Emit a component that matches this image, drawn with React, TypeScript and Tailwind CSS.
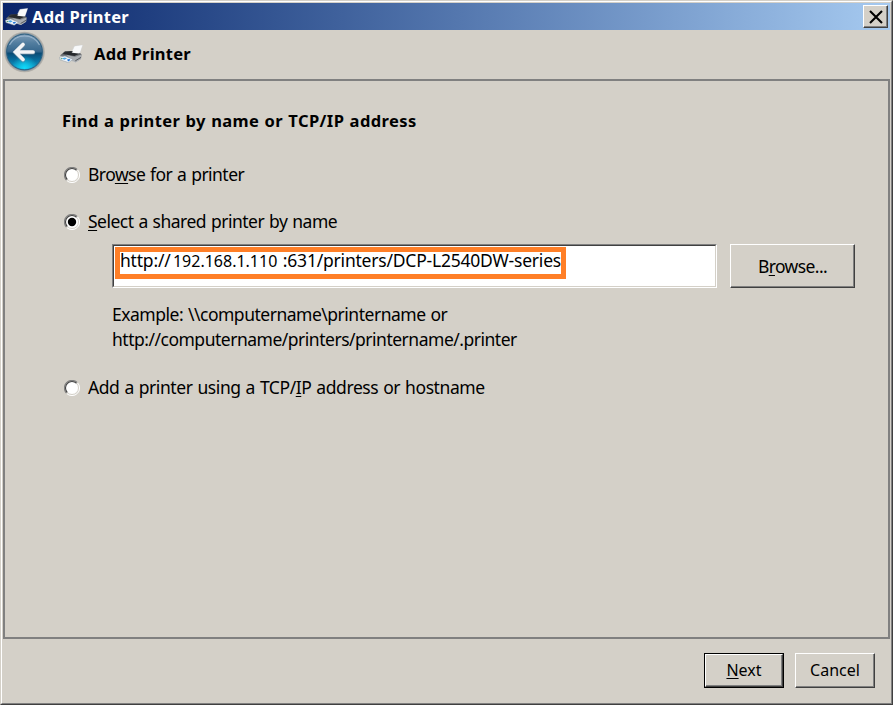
import React from 'react';

function PrinterIcon({ className }: { className: string }) {
  return (
    <svg viewBox="0 0 24 18" className={className}>
      <defs>
        <linearGradient id="pbody" x1="0" y1="0" x2="0" y2="1">
          <stop offset="0" stopColor="#2e3135" />
          <stop offset="0.45" stopColor="#7d8185" />
          <stop offset="1" stopColor="#c9cccf" />
        </linearGradient>
      </defs>
      <path d="M12 8.5 L15.5 1.2 L23.6 0 L20.5 9Z" fill="#f6f7f8" stroke="#d4d8dc" strokeWidth=".5" />
      <path d="M1 10.5 L6 6.2 L13 6 L21 8 L22.6 9.5 L22 14 L16.5 17.4 L9 15Z" fill="url(#pbody)" />
      <path d="M5 7.5 L12 6.4 L12.6 8 L20.5 8.6 L15.5 11 L4 9Z" fill="#26292d" />
      <path d="M13 7.8 L16 1.4 L23 .6 L20.4 8.6Z" fill="#f8f9fa" />
      <path d="M7 9.8 L15.8 12 L22.4 9.4 L22 14 L16.5 17.4 L13.5 15Z" fill="#a9adb1" />
      <path d="M16.3 15.8 L22 12.4" stroke="#55595e" strokeWidth="1" />
      <path d="M.5 12.3 L6 11 L14 14.4 L9.6 17.6 L1 14.8Z" fill="#eef4fa" stroke="#8f989f" strokeWidth=".5" />
      <path d="M3 13.2 L6 12.4 L8 13.6 L5.2 14.8Z" fill="#4fa8e8" />
      <path d="M8 14.4 L10.5 14 L11.5 15 L9.2 16.4Z" fill="#2677d4" />
      <path d="M1.8 13.2h1.6v1H1.8z" fill="#4f9b62" />
    </svg>
  );
}

function BackButton() {
  return (
    <svg viewBox="0 0 42 42" className="h-[42px] w-[42px] shrink-0">
      <defs>
        <linearGradient id="bk" x1="0" y1="0" x2="0" y2="1">
          <stop offset="0" stopColor="#7f9db8" />
          <stop offset=".25" stopColor="#527d9f" />
          <stop offset=".48" stopColor="#38688e" />
          <stop offset=".54" stopColor="#0a4c76" />
          <stop offset=".75" stopColor="#0873a3" />
          <stop offset="1" stopColor="#10a8d4" />
        </linearGradient>
        <radialGradient id="glow" cx=".5" cy=".98" r=".38">
          <stop offset="0" stopColor="#10dcfb" />
          <stop offset="1" stopColor="#10dcfb" stopOpacity="0" />
        </radialGradient>
      </defs>
      <circle cx="21.5" cy="21" r="20.3" fill="#b2afa9" />
      <circle cx="21.5" cy="21" r="19.2" fill="#8c9aa3" />
      <circle cx="21.5" cy="21" r="17.9" fill="url(#bk)" stroke="#2d5f80" strokeWidth="1" />
      <circle cx="21.5" cy="21" r="17" fill="url(#glow)" />
      <path d="M6.5 14 A17 17 0 0 1 36.5 14" fill="none" stroke="#a9c3d8" strokeWidth="1.2" opacity=".7" />
      <path d="M20 14 L12.5 21.5 L20 29 M13 21.5 H30" fill="none" stroke="#6d8799" strokeWidth="4.6" strokeLinecap="round" opacity=".6" />
      <path d="M20 13.5 L12.5 21 L20 28.5 M13 21 H30" fill="none" stroke="#f4f5f6" strokeWidth="3.7" strokeLinecap="round" />
    </svg>
  );
}

function Radio({ checked }: { checked?: boolean }) {
  return (
    <svg viewBox="0 0 16 16" className="relative top-px h-4 w-4 shrink-0">
      <circle cx="8" cy="8" r="6.8" fill="#fff" />
      <path d="M2.6 13.4 A7.5 7.5 0 0 1 13.4 2.6" fill="none" stroke="#808080" strokeWidth="1.1" />
      <path d="M3.4 12.6 A6.5 6.5 0 0 1 12.6 3.4" fill="none" stroke="#404040" strokeWidth="1.1" />
      <path d="M12.6 3.4 A6.5 6.5 0 0 1 3.4 12.6" fill="none" stroke="#d4d0c8" strokeWidth="1" />
      <path d="M13.4 2.6 A7.5 7.5 0 0 1 2.6 13.4" fill="none" stroke="#fff" strokeWidth="1" />
      {checked && <circle cx="8" cy="8" r="4.2" fill="#000" />}
    </svg>
  );
}

function Key({ children }: { children: React.ReactNode }) {
  return <span className="underline decoration-1 underline-offset-2">{children}</span>;
}

const raised =
  'flex items-center justify-center border border-t-white border-l-white border-r-[#404040] border-b-[#404040] bg-[#d4d0c8] shadow-[inset_-1px_-1px_0_#808080]';

export default function App() {
  return (
    <div className="flex h-[705px] w-[893px] flex-col overflow-hidden border-t border-l border-r border-b border-t-[#d4d0c8] border-l-[#d4d0c8] border-r-[#404040] border-b-[#404040] bg-[#d4d0c8] font-['Noto_Sans',sans-serif] text-[17.5px] whitespace-pre text-black">
      <div className="flex min-h-0 flex-1 flex-col border border-t-white border-l-white border-r-[#808080] border-b-[#808080] pt-px pr-px pl-px">
        <div className="flex h-[27px] shrink-0 items-center bg-linear-to-r from-[#0a246a] to-[#a6caf0] pr-[2px] pl-[2px]">
          <PrinterIcon className="h-[18px] w-[23px] shrink-0" />
          <span className="ml-1 flex-1 text-[16.5px] leading-[26px] font-bold tracking-[0.25px] text-white">Add Printer</span>
          <button className={raised + ' h-[23px] w-[25px]'}>
            <svg viewBox="0 0 14 14" className="h-[14px] w-[14px]">
              <path d="M1 1 L13 13 M13 1 L1 13" stroke="#000" strokeWidth="2.1" />
            </svg>
          </button>
        </div>
        <div className="flex h-[49px] shrink-0 items-start">
          <div className="pt-[1px]">
            <BackButton />
          </div>
          <PrinterIcon className="mt-[15px] ml-[14px] h-[18px] w-[24px] shrink-0" />
          <h1 className="mt-[12px] ml-[11px] text-[16.5px] leading-[24px] font-bold tracking-[0.25px]">Add Printer</h1>
        </div>
        <main className="h-[560px] shrink-0 border-2 border-[#808080] pl-[57px]">
          <h2 className="mt-[28px] text-[16.5px] leading-[24px] font-bold tracking-[0.4px] [word-spacing:0.6px]">Find a printer by name or TCP/IP address</h2>
          <label className="mt-[29px] ml-[2px] flex h-6 items-center gap-2">
            <Radio />
            <span className="leading-6 tracking-[-0.54px] [word-spacing:0.8px]">Bro<Key>w</Key>se for a printer</span>
          </label>
          <label className="mt-[23px] ml-[2px] flex h-6 items-center gap-2">
            <Radio checked />
            <span className="leading-6 tracking-[-0.5px] [word-spacing:0.8px]"><Key>S</Key>elect a shared printer by name</span>
          </label>
          <div className="mt-[11px] ml-[50px] flex gap-[13px]">
            <div className="h-[44px] w-[605px] border border-t-[#808080] border-l-[#808080] border-r-white border-b-white">
              <div className="h-full border border-t-[#404040] border-l-[#404040] border-r-[#d4d0c8] border-b-[#d4d0c8] bg-white pt-px pl-px">
                <div className="flex h-[32px] w-[451px] border-[5px] border-[#ff7f27] leading-[16px]">
                  <span className="w-[53px] tracking-[-0.2px]">http://</span>
                  <span className="w-[110px] text-[16px] leading-[19px]">192.168.1.110</span>
                  <span className="tracking-[-0.21px]">:631/printers/DCP-L2540DW-series</span>
                </div>
              </div>
            </div>
            <button className={raised + ' h-[44px] w-[125px] tracking-[-0.6px]'}>
              <span>B<Key>r</Key>owse...</span>
            </button>
          </div>
          <p className="mt-[14px] ml-[50px] leading-[25px] tracking-[-0.49px] [word-spacing:0.8px]">
            Example: \\computername\printername or<br />http://computername/printers/printername/.printer
          </p>
          <label className="mt-[23px] ml-[2px] flex h-6 items-center gap-2">
            <Radio />
            <span className="leading-6 tracking-[-0.42px] [word-spacing:0.8px]">Add a printer using a TCP/<Key>I</Key>P address or hostname</span>
          </label>
        </main>
        <footer className="flex gap-[11px] pt-[14px] pl-[701px] text-[16px] leading-[24px]">
          <button className="h-[35px] w-[80px] border border-black">
            <span className={raised + ' h-full w-full pb-[2px]'}>
              <span><Key>N</Key>ext</span>
            </span>
          </button>
          <button className={raised + ' h-[35px] w-[80px] pb-[2px]'}>Cancel</button>
        </footer>
      </div>
    </div>
  );
}
